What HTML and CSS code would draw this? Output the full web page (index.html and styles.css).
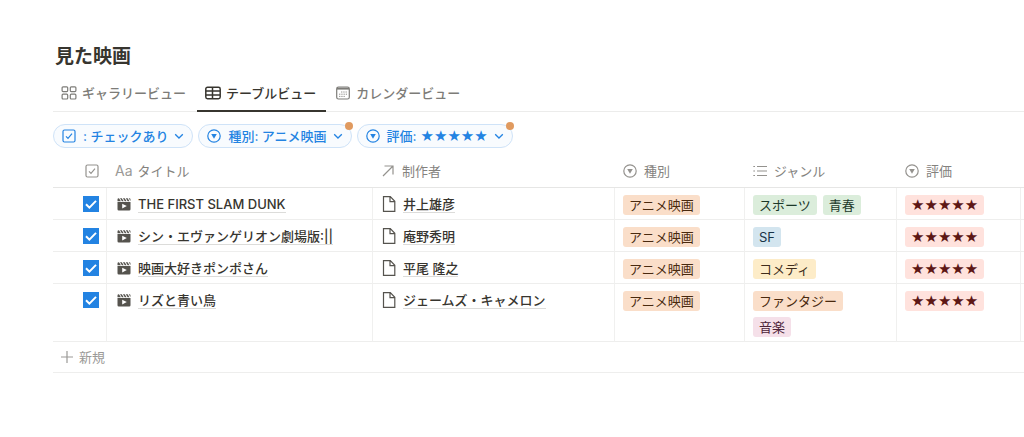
FILE: index.html
```html
<!DOCTYPE html>
<html lang="ja">
<head>
<meta charset="utf-8">
<title>見た映画</title>
<link rel="stylesheet" href="styles.css">
</head>
<body>
<svg class="defs" aria-hidden="true">
  <symbol id="check" viewBox="0 0 14 14"><rect x="1" y="1" width="12" height="12" rx="1.5" fill="none" stroke="currentColor" stroke-width="1.2"/><path d="M4 7.3l2 2.1 4-4.7" fill="none" stroke="currentColor" stroke-width="1.2"/></symbol>
  <symbol id="select" viewBox="0 0 14 14"><circle cx="7" cy="7" r="6.2" fill="none" stroke="currentColor" stroke-width="1.2"/><path d="M4.200 5h5.600L7 9.800z" fill="currentColor"/></symbol>
  <symbol id="chevron" viewBox="0 0 10 10"><path d="M1.200 3.200L5 7l3.800-3.800" fill="none" stroke="currentColor" stroke-width="1.300"/></symbol>
  <symbol id="clapper" viewBox="0 0 14 14"><path fill="currentColor" fill-rule="evenodd" d="M.5 5h13v7.200a1.300 1.300 0 0 1-1.300 1.300H1.800a1.300 1.300 0 0 1-1.300-1.300zM5.200 6.700v4.800L9.800 9.100z"/><path fill="currentColor" d="M.5 4.200V2.600Q.5 1.300 1.800 1.300h.2l1.900 2.900zM3 1.300h1.800l1.900 2.900H4.900zM5.900 1.300h1.800l1.900 2.900H7.800zM8.800 1.300h1.800l1.900 2.900h-1.800zM11.700 1.300h.5q1.300 0 1.300 1.300v1.400z"/></symbol>
  <symbol id="page" viewBox="0 0 14 16"><path d="M1.500.7h6.800l4.500 4.600v10H1.500zM8 .7v4.900h4.800" fill="none" stroke="currentColor" stroke-width="1.200"/></symbol>
  <symbol id="tick" viewBox="0 0 16 16"><path d="M3 8.200l3.400 3.400L13 4.900" fill="none" stroke="#fff" stroke-width="2"/></symbol>
</svg>
<main class="database">
  <h1 class="title">見た映画</h1>
  <nav class="tabs">
    <button class="tab"><svg class="icon tab-icon" viewBox="0 0 16 14"><g fill="none" stroke="currentColor" stroke-width="1.200"><rect x="1.100" y=".8" width="5.600" height="4.800" rx="1"/><rect x="9.300" y=".8" width="5.600" height="4.800" rx="1"/><rect x="1.100" y="8.200" width="5.600" height="4.800" rx="1"/><rect x="9.300" y="8.200" width="5.600" height="4.800" rx="1"/></g></svg>ギャラリービュー</button>
    <button class="tab tab-active"><svg class="icon tab-icon" viewBox="0 0 16 14"><path d="M2.500 1.200h11a1.700 1.700 0 0 1 1.700 1.700v8.200a1.700 1.700 0 0 1-1.700 1.700h-11a1.700 1.700 0 0 1-1.700-1.700V2.900a1.700 1.700 0 0 1 1.700-1.700zM.8 5h14.400M.8 8.900h14.400M7.500 1.200v11.600" fill="none" stroke="currentColor" stroke-width="1.500"/></svg>テーブルビュー</button>
    <button class="tab"><svg class="icon tab-icon" viewBox="0 0 16 14"><rect x="1.700" y="1" width="12.600" height="12" rx="1.800" fill="none" stroke="currentColor" stroke-width="1.200"/><path d="M2 2.600h12" stroke="currentColor" stroke-width="2"/><path d="M6.200 6h6M4.200 8.200h8M4.200 10.400h6" stroke="currentColor" stroke-width="1" stroke-dasharray="1.100 1.100"/></svg>カレンダービュー</button>
  </nav>
  <div class="filters">
    <button class="filter"><svg class="icon"><use href="#check"/></svg><span class="label">: チェックあり</span><svg class="chevron"><use href="#chevron"/></svg></button>
    <button class="filter"><svg class="icon"><use href="#select"/></svg><span class="label">種別: アニメ映画</span><svg class="chevron"><use href="#chevron"/></svg><i class="dot"></i></button>
    <button class="filter"><svg class="icon"><use href="#select"/></svg><span class="label">評価: <span class="stars">★★★★★</span></span><svg class="chevron"><use href="#chevron"/></svg><i class="dot"></i></button>
  </div>
  <table class="movies">
    <colgroup><col class="col-check"><col class="col-title"><col class="col-author"><col class="col-kind"><col class="col-genre"><col class="col-rating"><col></colgroup>
    <thead>
      <tr>
        <th class="check-cell" aria-label="チェック"><svg class="icon"><use href="#check"/></svg></th>
        <th><div class="head head-title"><span class="aa">Aa</span>タイトル</div></th>
        <th><div class="head"><svg class="icon" viewBox="0 0 14 14"><path d="M2 12L12 2M3.500 2H12v8.500" fill="none" stroke="currentColor" stroke-width="1.200"/></svg>制作者</div></th>
        <th><div class="head"><svg class="icon"><use href="#select"/></svg>種別</div></th>
        <th><div class="head"><svg class="icon" viewBox="0 0 14 14"><path d="M4 2.500h10M4 7h10M4 11.500h10M.3 2.500H2M.3 7H2M.3 11.500H2" stroke="currentColor" stroke-width="1.200"/></svg>ジャンル</div></th>
        <th><div class="head"><svg class="icon"><use href="#select"/></svg>評価</div></th>
        <th></th>
      </tr>
    </thead>
    <tbody>
      <tr>
        <td class="check-cell"><label class="box"><input class="tick" type="checkbox" checked aria-label="THE FIRST SLAM DUNK"><svg class="mark"><use href="#tick"/></svg></label></td>
        <td><div class="entry"><svg class="icon clapper"><use href="#clapper"/></svg><a class="link" href="#">THE FIRST SLAM DUNK</a></div></td>
        <td><div class="entry"><svg class="icon page"><use href="#page"/></svg><a class="link" href="#">井上雄彦</a></div></td>
        <td><div class="tags"><span class="tag orange">アニメ映画</span></div></td>
        <td class="genre"><div class="tags"><span class="tag green">スポーツ</span><span class="tag green">青春</span></div></td>
        <td><div class="tags"><span class="tag red stars">★★★★★</span></div></td>
        <td></td>
      </tr>
      <tr>
        <td class="check-cell"><label class="box"><input class="tick" type="checkbox" checked aria-label="シン・エヴァンゲリオン劇場版:||"><svg class="mark"><use href="#tick"/></svg></label></td>
        <td><div class="entry"><svg class="icon clapper"><use href="#clapper"/></svg><a class="link" href="#">シン・エヴァンゲリオン劇場版:||</a></div></td>
        <td><div class="entry"><svg class="icon page"><use href="#page"/></svg><a class="link" href="#">庵野秀明</a></div></td>
        <td><div class="tags"><span class="tag orange">アニメ映画</span></div></td>
        <td class="genre"><div class="tags"><span class="tag blue">SF</span></div></td>
        <td><div class="tags"><span class="tag red stars">★★★★★</span></div></td>
        <td></td>
      </tr>
      <tr>
        <td class="check-cell"><label class="box"><input class="tick" type="checkbox" checked aria-label="映画大好きポンポさん"><svg class="mark"><use href="#tick"/></svg></label></td>
        <td><div class="entry"><svg class="icon clapper"><use href="#clapper"/></svg><a class="link" href="#">映画大好きポンポさん</a></div></td>
        <td><div class="entry"><svg class="icon page"><use href="#page"/></svg><a class="link" href="#">平尾 隆之</a></div></td>
        <td><div class="tags"><span class="tag orange">アニメ映画</span></div></td>
        <td class="genre"><div class="tags"><span class="tag yellow">コメディ</span></div></td>
        <td><div class="tags"><span class="tag red stars">★★★★★</span></div></td>
        <td></td>
      </tr>
      <tr>
        <td class="check-cell"><label class="box"><input class="tick" type="checkbox" checked aria-label="リズと青い鳥"><svg class="mark"><use href="#tick"/></svg></label></td>
        <td><div class="entry"><svg class="icon clapper"><use href="#clapper"/></svg><a class="link" href="#">リズと青い鳥</a></div></td>
        <td><div class="entry"><svg class="icon page"><use href="#page"/></svg><a class="link" href="#">ジェームズ・キャメロン</a></div></td>
        <td><div class="tags"><span class="tag orange">アニメ映画</span></div></td>
        <td class="genre"><div class="tags"><span class="tag orange">ファンタジー</span><span class="tag pink">音楽</span></div></td>
        <td><div class="tags"><span class="tag red stars">★★★★★</span></div></td>
        <td></td>
      </tr>
    </tbody>
  </table>
  <button class="new-row"><svg class="icon" viewBox="0 0 14 14"><path d="M7 1v12M1 7h12" stroke="currentColor" stroke-width="1.200"/></svg>新規</button>
</main>
</body>
</html>
```
FILE: styles.css
```css
* {
  box-sizing: border-box;
}

body {
  margin: 0;
  background: #fff;
  color: #37352f;
  font: 13px/20px Inter, "Noto Sans CJK JP", sans-serif;
}

button {
  margin: 0;
  padding: 0;
  border: 0;
  background: none;
  font: inherit;
  color: inherit;
  white-space: nowrap;
}

.defs {
  position: absolute;
  width: 0;
  height: 0;
}

.icon {
  flex: none;
  width: 14px;
  height: 14px;
}

.stars {
  font-family: "DejaVu Sans", sans-serif;
  font-size: 15px;
  font-weight: 400;
}

.database {
  padding: 43px 0 0 53px;
}

.title {
  margin: 0;
  padding-left: 2px;
  font-size: 19px;
  line-height: 28px;
  font-weight: 700;
}

.tabs {
  display: flex;
  gap: 1px;
  margin-top: 4px;
  border-bottom: 1px solid #ececeb;
}

.tab {
  display: flex;
  align-items: center;
  gap: 5px;
  height: 37px;
  margin-bottom: -1px;
  padding: 0 10px 0 8px;
  border-bottom: 2px solid transparent;
  color: #7d7c78;
  font-weight: 500;
}

.tab-active {
  border-bottom-color: #37352f;
  color: #37352f;
}

.tab-icon {
  width: 16px;
}

.filters {
  display: flex;
  gap: 5px;
  padding: 12px 0 6px;
}

.filter {
  position: relative;
  display: flex;
  align-items: center;
  height: 24px;
  padding: 0 8px;
  border: 1px solid #cfe3f8;
  border-radius: 12px;
  background: #f8fbfe;
  color: #2383e2;
  font-weight: 500;
}

.label {
  display: flex;
  gap: 4px;
  margin: 0 6px 0 7px;
}

.chevron {
  width: 10px;
  height: 10px;
}

.dot {
  position: absolute;
  top: -3px;
  right: -2px;
  width: 8px;
  height: 8px;
  border-radius: 50%;
  background: #e09a5f;
}

.movies {
  width: 100%;
  table-layout: fixed;
  border-collapse: separate;
  border-spacing: 0;
}

.col-check {
  width: 54px;
}

.col-title {
  width: 266px;
}

.col-author {
  width: 242px;
}

.col-kind {
  width: 130px;
}

.col-genre {
  width: 152px;
}

.col-rating {
  width: 124px;
}

th {
  height: 34px;
  padding: 0 8px;
  border-bottom: 1px solid #e6e6e5;
  color: #84827e;
  font-weight: 400;
  text-align: left;
}

.head {
  display: flex;
  align-items: center;
  gap: 7px;
}

.head-title {
  gap: 5px;
}

.head .icon,
th.check-cell .icon {
  color: #94928e;
}

.aa {
  color: #9b9a97;
  font-size: 14px;
}

td {
  padding: 7px 8px 4px;
  border-right: 1px solid #f0f0ef;
  border-bottom: 1px solid #eeeeed;
  vertical-align: top;
}

td:last-child {
  border-right: 0;
}

td.genre {
  padding-right: 16px;
}

.check-cell {
  padding-right: 7px;
}

th.check-cell {
  padding-right: 8px;
}

.check-cell .icon {
  display: block;
  margin-left: auto;
}

.box {
  display: grid;
  width: 16px;
  margin: 1px 0 0 auto;
}

.tick,
.mark {
  grid-area: 1 / 1;
  width: 16px;
  height: 16px;
}

.tick {
  appearance: none;
  margin: 0;
  background: #2383e2;
}

.mark {
  z-index: 1;
  pointer-events: none;
}

.entry {
  display: flex;
  align-items: center;
  gap: 7px;
  height: 18px;
}

.clapper {
  margin-left: 2px;
  color: #55534e;
}

.page {
  height: 16px;
  margin-left: 1px;
  color: #55534e;
}

.link {
  border-bottom: 1px solid #dcdcda;
  color: inherit;
  font-weight: 500;
  line-height: 16px;
  text-decoration: none;
  white-space: nowrap;
}

.tags {
  display: flex;
  flex-wrap: wrap;
  gap: 6px;
}

.tag {
  padding: 0 6px;
  border-radius: 3px;
  white-space: nowrap;
}

.orange {
  background: #fadec9;
  color: #49290e;
}

.green {
  background: #dbeddb;
  color: #1c3829;
}

.blue {
  background: #d3e5ef;
  color: #183347;
}

.yellow {
  background: #fdecc8;
  color: #402c1b;
}

.pink {
  background: #f5e0e9;
  color: #4c2337;
}

.red {
  background: #ffe2dd;
  color: #5d1715;
}

.new-row {
  display: flex;
  align-items: center;
  gap: 5px;
  width: 100%;
  height: 31px;
  padding-left: 7px;
  border-bottom: 1px solid #eeeeed;
  color: #9b9a97;
}
```
